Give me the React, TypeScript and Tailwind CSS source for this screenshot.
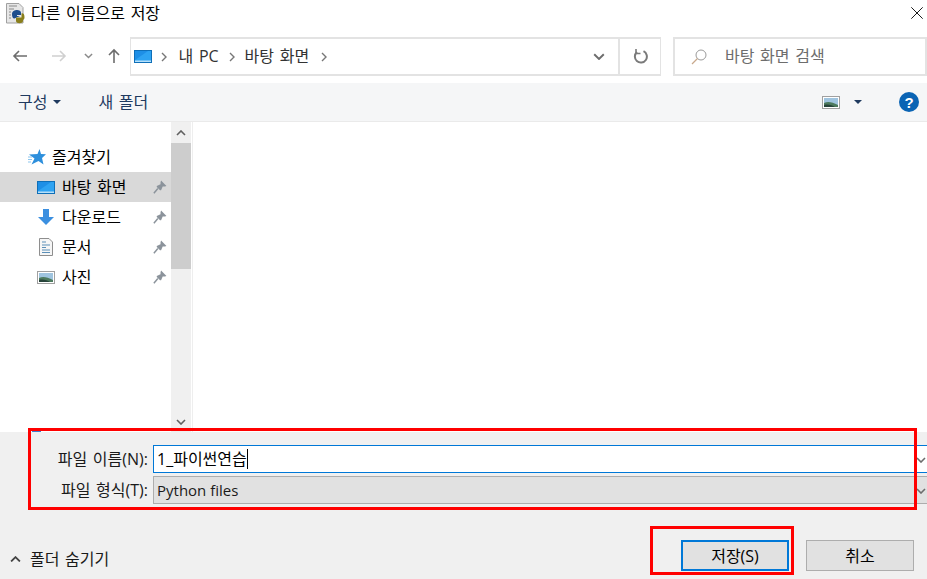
import React from "react";

function Monitor({ className = "" }: { className?: string }) {
  return (
    <svg width="18" height="13" viewBox="0 0 18 13" className={className}>
      <rect x="0.5" y="0.5" width="17" height="12" fill="#1e8fe6" stroke="#0f6fb8" />
      <path d="M1 10 L14 1 H17 V11 H1Z" fill="#2ea3f2" />
      <rect x="1" y="10.5" width="16" height="1.5" fill="#b5e0fa" />
    </svg>
  );
}

function Picture() {
  return (
    <svg width="18" height="13" viewBox="0 0 18 13">
      <rect x="0.5" y="0.5" width="17" height="12" fill="#fff" stroke="#a0a0a0" />
      <rect x="2" y="2" width="14" height="9" fill="#9fc4df" />
      <path d="M2 7 C6 5 10 6 16 9 V11 H2Z" fill="#4d7a5e" />
      <path d="M2 9 C6 8 10 9 13 11 H2Z" fill="#27443a" />
    </svg>
  );
}

function Pin() {
  return (
    <svg width="14" height="14" viewBox="0 0 13 13">
      <path d="M7.5 0.5 L12.5 5.5 L11 6 L9 6 L7.5 9.5 L6.5 9.5 L3.5 6.5 L3.5 5.5 L7 4 L7 2Z" fill="#8b939b" />
      <path d="M4.5 8 L0.8 12.2" stroke="#8b939b" strokeWidth="1.4" />
    </svg>
  );
}

function Chevron({ dir = "down", color = "#6d6d6d", w = 10 }: { dir?: "down" | "up"; color?: string; w?: number }) {
  return (
    <svg width={w} height={w * 0.6} viewBox="0 0 10 6">
      <path d={dir === "down" ? "M1 1 L5 5 L9 1" : "M1 5 L5 1 L9 5"} fill="none" stroke={color} strokeWidth="1.6" />
    </svg>
  );
}

function Caret() {
  return (
    <svg width="8" height="4" viewBox="0 0 8 4">
      <path d="M0 0H8L4 4Z" fill="#1f3a5f" />
    </svg>
  );
}

function Sep({ className = "" }: { className?: string }) {
  return (
    <svg width="6" height="10" viewBox="0 0 6 10" className={className}>
      <path d="M1 1 L5 5 L1 9" fill="none" stroke="#777" strokeWidth="1.4" />
    </svg>
  );
}

function Row({ icon, label, selected }: { icon: React.ReactNode; label: string; selected?: boolean }) {
  return (
    <div className={`flex h-[30px] items-center pr-[4px] ${selected ? "bg-[#d9d9d9]" : ""}`}>
      <div className="flex w-[62px] shrink-0 justify-end pr-[7px]">{icon}</div>
      <span className="flex-1 text-black">{label}</span>
      <Pin />
    </div>
  );
}

export default function App() {
  return (
    <div
      className="relative flex h-[579px] w-[927px] flex-col overflow-hidden bg-white text-[16px] text-[#1a1a1a] [word-spacing:1.5px]"
      style={{ fontFamily: '"Open Sans", "Noto Sans CJK KR", sans-serif' }}
    >
      {/* title bar */}
      <div className="flex h-[37px] shrink-0 items-start pl-[6px] pt-[3px]">
        <svg width="19" height="21" viewBox="0 0 19 21" className="mr-[6px] shrink-0">
          <path d="M0.5 0.5 H13 L17 4.5 V20 H0.5Z" fill="#e6e6e6" stroke="#a0a0a0" />
          <path d="M3 3 H11 M3 6 H8 M3 9 H5 M3 12 H5 M3 15 H5" stroke="#8a8a8a" />
          <path d="M6 11 C6 6 15 6 15 9.5 V12 H11 V13 H14 L8.5 15.5 C6.5 15.5 6 13.5 6 11Z" fill="#1f4e8c" />
          <path d="M18.5 14 C18.5 10.5 16.5 10 15.5 10.5 V14.5 H10 V18 C10 21 17 21 17 18 V17 C18 16.5 18.5 16 18.5 14Z" fill="#8a7f1c" />
        </svg>
        <span className="text-[16px] leading-[20px] text-black">다른 이름으로 저장</span>
        <div className="ml-auto mr-[4px] mt-[4px]">
          <svg width="12" height="12" viewBox="0 0 12 12" className="block">
            <path d="M0.3 0.3 L11.7 11.7 M11.7 0.3 L0.3 11.7" stroke="#1a1a1a" strokeWidth="1" />
          </svg>
        </div>
      </div>

      {/* navigation row */}
      <div className="flex h-[46px] shrink-0 items-start">
        <div className="flex h-[38px] w-[130px] shrink-0 items-center">
          <svg width="16" height="14" viewBox="0 0 16 14" className="ml-[12px]">
            <path d="M15 7 H2 M7 2 L2 7 L7 12" fill="none" stroke="#6d6d6d" strokeWidth="1.6" />
          </svg>
          <svg width="16" height="14" viewBox="0 0 16 14" className="ml-[23px]">
            <path d="M1 7 H14 M9 2 L14 7 L9 12" fill="none" stroke="#d0d0d0" strokeWidth="1.6" />
          </svg>
          <div className="ml-[17px]">
            <Chevron w={9} color="#8a8a8a" />
          </div>
          <svg width="14" height="16" viewBox="0 0 14 16" className="ml-[14px]">
            <path d="M7 15 V2 M2 7 L7 2 L12 7" fill="none" stroke="#6d6d6d" strokeWidth="1.6" />
          </svg>
        </div>
        <div className="flex h-[39px] w-[531px] shrink-0 items-center border-2 border-x-[1.5px] border-[#e3e3e3]">
          <Monitor className="ml-[2.5px]" />
          <Sep className="ml-[9px]" />
          <span className="ml-[12px] pb-[2px] text-[#333]">내 PC</span>
          <Sep className="ml-[10px]" />
          <span className="ml-[10px] pb-[2px] text-[#333]">바탕 화면</span>
          <Sep className="ml-[12px]" />
          <div className="ml-auto flex h-full items-center">
            <div className="mr-[13px]"><Chevron w={12} color="#6d6d6d" /></div>
            <div className="flex h-full w-[42px] items-center justify-center border-l-2 border-[#e3e3e3]">
              <svg width="15" height="15" viewBox="0 0 15 15">
                <path d="M4 3 A6 6 0 1 0 10.5 2.2" fill="none" stroke="#7a7a7a" strokeWidth="2" />
                <path d="M3 0 V4.5 H7.5" fill="none" stroke="#7a7a7a" strokeWidth="1.6" />
              </svg>
            </div>
          </div>
        </div>
        <div className="ml-[12px] flex h-[39px] w-[254px] shrink-0 items-center border-2 border-[#e3e3e3] pl-[16px]">
          <svg width="16" height="16" viewBox="0 0 16 16">
            <circle cx="10" cy="6" r="5" fill="none" stroke="#9a9a9a" />
            <path d="M6.5 9.5 L1 15" stroke="#c8a98c" strokeWidth="1.2" />
          </svg>
          <span className="ml-[18px] pb-[2px] text-[#6d6d6d]">바탕 화면 검색</span>
        </div>
      </div>

      {/* toolbar */}
      <div className="flex h-[39px] shrink-0 items-center border-b border-[#eaeaea] bg-[#f5f6f7] pr-[8px]">
        <span className="ml-[18px] text-[#1f3a5f]">구성</span>
        <div className="ml-[6px]"><Caret /></div>
        <span className="ml-[37px] text-[#1f3a5f]">새 폴더</span>
        <div className="ml-auto flex items-center">
          <Picture />
          <div className="ml-[14px]"><Caret /></div>
          <svg width="20" height="20" viewBox="0 0 20 20" className="ml-[37px]">
            <circle cx="10" cy="10" r="10" fill="#0a64b4" />
            <text x="10" y="15.5" textAnchor="middle" fontSize="15" fontWeight="700" fill="#fff" fontFamily="Liberation Sans">?</text>
          </svg>
        </div>
      </div>

      {/* body */}
      <div className="flex h-[310px] shrink-0">
        <div className="w-[171px] shrink-0 pt-[20px]">
          <div className="flex h-[30px] items-center">
            <div className="flex w-[46px] shrink-0 justify-end">
              <svg width="18" height="16" viewBox="0 0 18 16">
                <path d="M11.5 0 L13 5 L18 5.2 L14 9 L15.5 15.5 L10.5 12 L3.5 15.5 L6.5 9.5 L1 5.5 L9.5 5Z" fill="#2d8fdc" />
                <path d="M0 8 H4 M0 10.5 H4 M0 13 H3" stroke="#8cc6ee" strokeWidth="1" />
              </svg>
            </div>
            <span className="ml-[6px] text-black">즐겨찾기</span>
          </div>
          <Row selected icon={<Monitor />} label="바탕 화면" />
          <Row
            icon={
              <svg width="16" height="16" viewBox="0 0 16 16" className="mr-[1px]">
                <path d="M5 0 H11 V8 H16 L8 16 L0 8 H5Z" fill="#3b8fe0" />
              </svg>
            }
            label="다운로드"
          />
          <Row
            icon={
              <svg width="14" height="18" viewBox="0 0 14 18" className="mr-[2px]">
                <path d="M0.5 0.5 H10 L13.5 4 V17.5 H0.5Z" fill="#f6f6f6" stroke="#8e8e8e" />
                <path d="M3 4 H7 M3 7 H11 M3 9.5 H7 M3 12 H11 M3 14.5 H11" stroke="#5b8fb8" />
              </svg>
            }
            label="문서"
          />
          <Row icon={<Picture />} label="사진" />
        </div>
        <div className="flex w-[20px] shrink-0 flex-col bg-[#f0f0f0]">
          <div className="flex h-[21px] items-center justify-center"><Chevron dir="up" color="#606060" /></div>
          <div className="h-[126px] bg-[#cdcdcd]" />
          <div className="flex-1" />
          <div className="flex h-[21px] items-center justify-center"><Chevron color="#606060" /></div>
        </div>
        <div className="ml-[1px] w-px shrink-0 bg-[#eeeeee]" />
      </div>

      {/* bottom panel */}
      <div className="flex flex-1 flex-col bg-[#f0f0f0] pt-[13px]">
        <div className="flex h-[28px] items-center">
          <div className="w-[148px] shrink-0 text-right text-[#1a1a1a]">파일 이름(N):</div>
          <div className="ml-[5px] flex h-[28px] w-[790px] shrink-0 items-center border border-[#0078d7] bg-white pl-[3px]">
            <span className="text-black">1_파이썬연습</span>
            <div className="h-[20px] w-px bg-black" />
          </div>
        </div>
        <div className="mt-[3px] flex h-[28px] items-center">
          <div className="w-[148px] shrink-0 text-right text-[#1a1a1a]">파일 형식(T):</div>
          <div className="ml-[5px] flex h-[28px] w-[790px] shrink-0 items-center border border-[#adadad] bg-[#e1e1e1] pl-[3px]">
            <span className="text-[15px] text-[#1a1a1a] [word-spacing:0px]">Python files</span>
          </div>
        </div>
        <div className="mt-[36px] flex items-center">
          <div className="ml-[10px] mt-[7px] flex items-center">
            <Chevron dir="up" color="#444" w={11} />
            <span className="ml-[9px] text-[#1a1a1a]">폴더 숨기기</span>
          </div>
          <div className="ml-auto mr-[13px] flex gap-[17px]">
            <div className="flex h-[31px] w-[108px] items-center justify-center border-2 border-[#0078d7] bg-[#e1e1e1] text-black">저장(S)</div>
            <div className="flex h-[31px] w-[108px] items-center justify-center border border-[#adadad] bg-[#e1e1e1] text-black">취소</div>
          </div>
        </div>
      </div>

      {/* chevrons at the field ends */}
      <div className="absolute left-[916px] top-[457px]"><Chevron w={10} color="#6d6d6d" /></div>
      <div className="absolute left-[916px] top-[488px]"><Chevron w={10} color="#6d6d6d" /></div>

      {/* red annotations */}
      <div className="absolute left-[28px] top-[428px] h-[82px] w-[889px] border-[3px] border-[#ff0000]" />
      <div className="absolute left-[650px] top-[526px] h-[49px] w-[144px] border-[3px] border-[#ff0000]" />
      <div className="absolute left-[32px] top-[431px] h-px w-[9px] bg-[#3f7fd0]" />
    </div>
  );
}
